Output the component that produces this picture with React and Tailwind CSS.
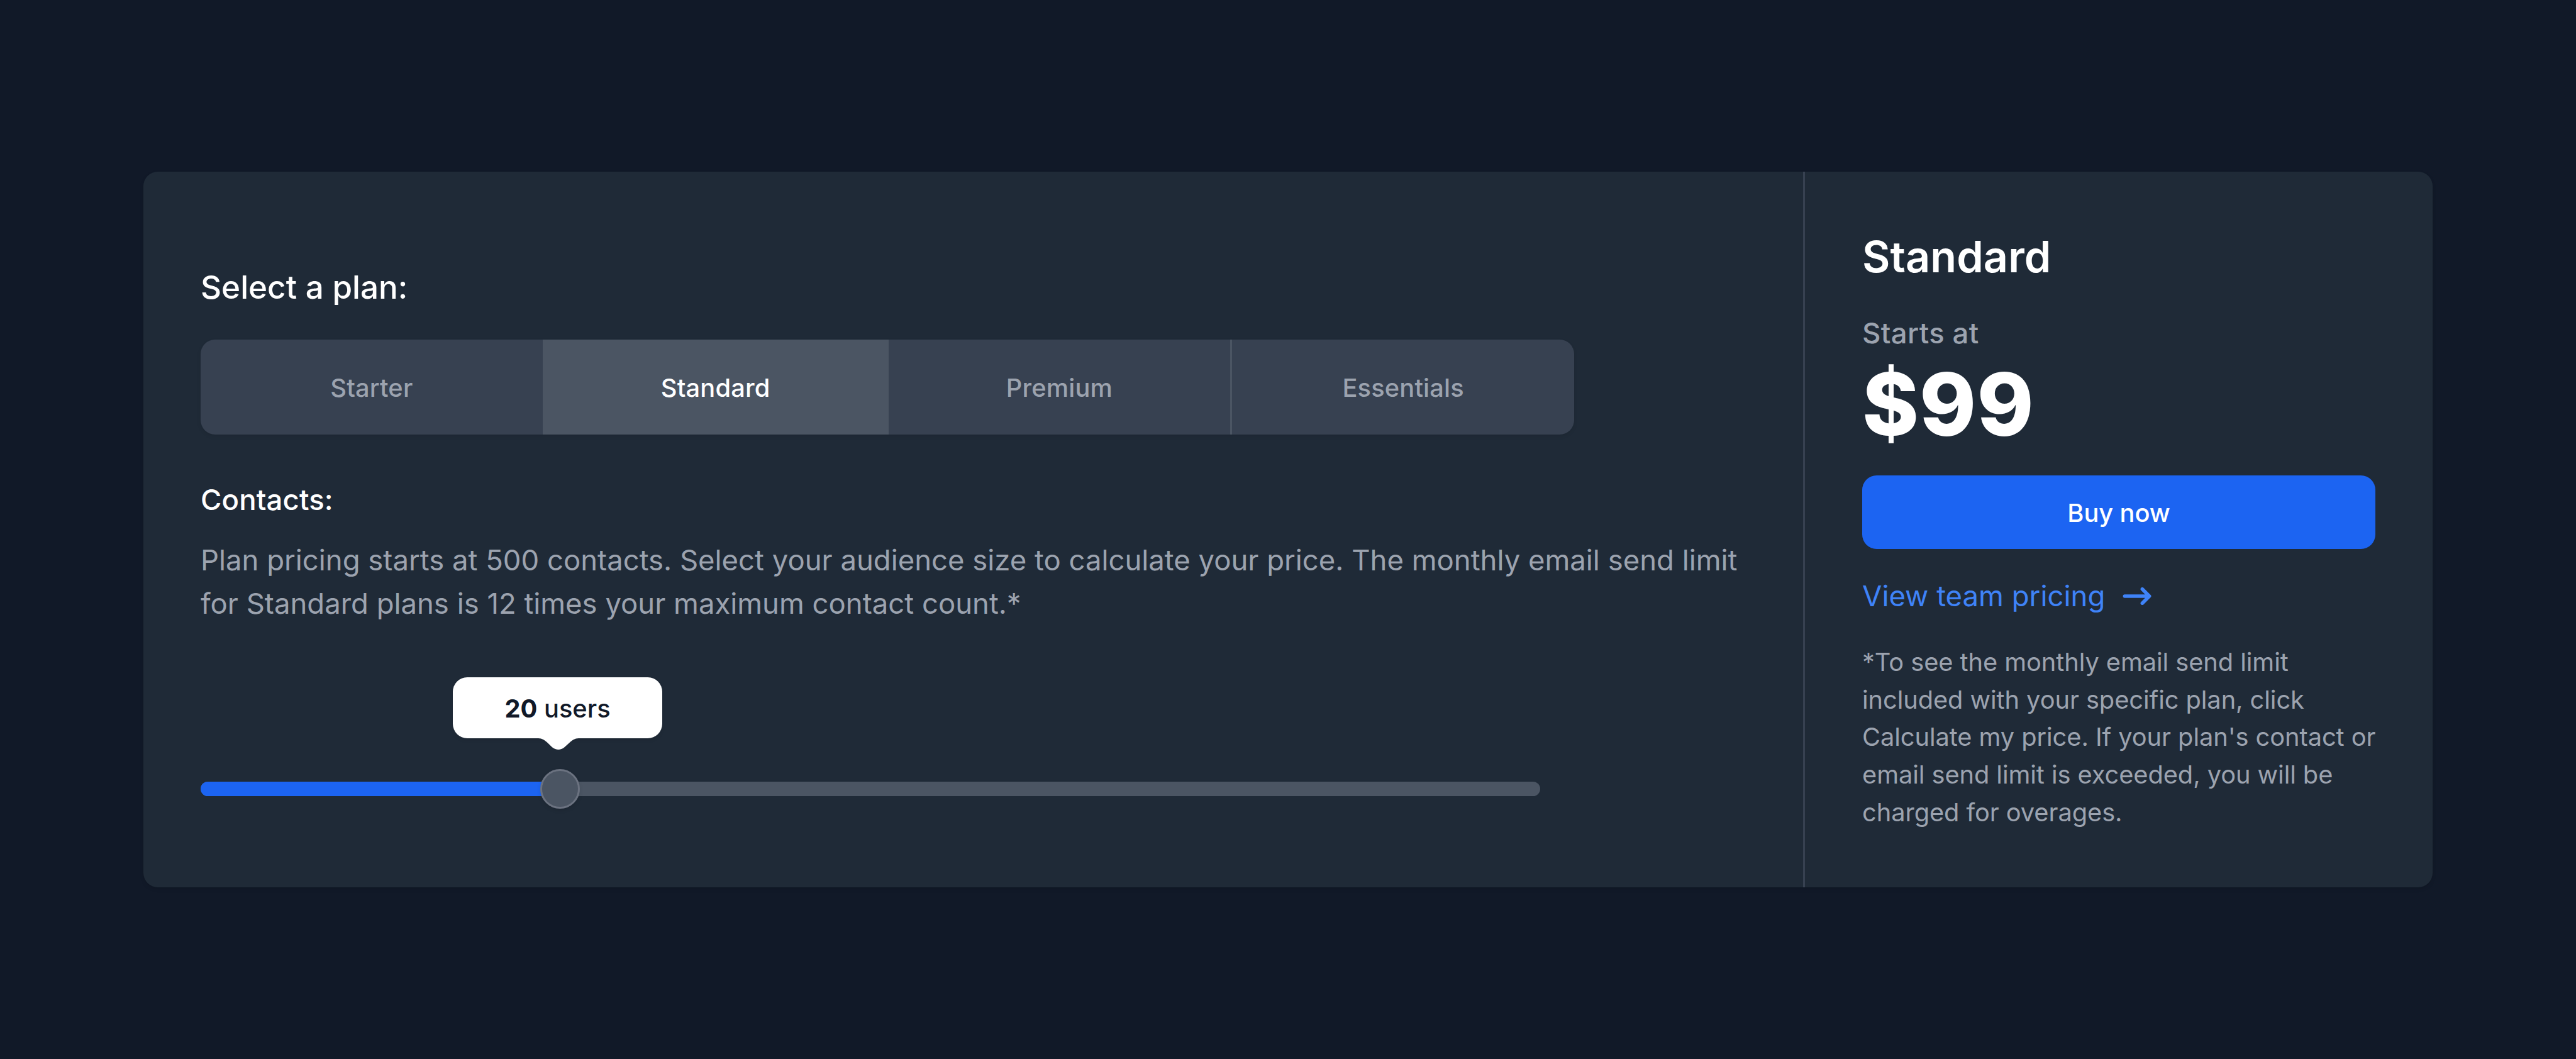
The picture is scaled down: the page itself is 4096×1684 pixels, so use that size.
import React, { useState } from "react";

const plans = ["Starter", "Standard", "Premium", "Essentials"];

const PlanTabs = ({ active, onSelect }) => {
    return (
        <div className="flex h-[151px] w-[2184px] overflow-hidden rounded-[23px] bg-[#374151] shadow-[0_3px_6px_rgba(0,0,0,0.08)]">
            {plans.map((plan, i) => (
                <button
                    key={plan}
                    onClick={() => onSelect(plan)}
                    className={`flex grow basis-0 items-center justify-center box-content pt-[3px] text-[39.82px] leading-[60px] font-medium tracking-[0.15px] ${
                        i < plans.length - 1 ? "border-r-3 border-[#4b5563]" : ""
                    } ${active === plan ? "bg-[#4b5563] text-white" : "text-[#9ca3af]"}`}
                >
                    {plan}
                </button>
            ))}
        </div>
    );
};

const ContactSlider = ({ users }) => {
    return (
        <div className="relative mt-[249px] h-[23px] w-[2130px] rounded-full bg-[#4b5563]">
            <div className="h-full w-[572px] rounded-full bg-[#1c64f2]"></div>

            {/* thumb */}
            <div className="absolute top-[-20px] left-[540px] size-[63px] rounded-full border-3 border-[#6b7280] bg-[#4b5563] shadow-[0_3px_6px_rgba(0,0,0,0.1)]"></div>

            {/* tooltip */}
            <div className="absolute top-[-166px] left-[401px] flex h-[97px] w-[333px] items-center justify-center rounded-[23px] bg-white pt-[3px] text-[39.82px] leading-[60px] text-[#111928] shadow-[0_3px_6px_rgba(0,0,0,0.08)]">
                <p className="font-medium">
                    <span className="font-bold">{users}</span> users
                </p>
                <svg className="absolute top-full left-[136px] h-[18px] w-[64px]" viewBox="0 0 64 18" fill="#fff">
                    <path d="M0 0C6 0 10 3 14.5 7L22 14.2Q32 21.8 41.5 14.2L49.5 7C54 3 58 0 64 0Z" />
                </svg>
            </div>
        </div>
    );
};

const App = () => {
    const [active, setActive] = useState("Standard");

    return (
        <div className="flex h-[1684px] w-[4096px] items-center justify-center bg-[#111928] font-[Inter,sans-serif]">
            <div className="flex h-[1138px] w-[3640px] overflow-hidden rounded-[23px] bg-[#1f2a37] shadow-[0_3px_6px_rgba(0,0,0,0.1)]">

                {/* plan and contacts */}
                <div className="flex grow flex-col justify-center pl-[91px]">
                    <h2 className="text-[51.2px] leading-[77px] font-medium text-white">Select a plan:</h2>
                    <div className="mt-[45px]">
                        <PlanTabs active={active} onSelect={setActive} />
                    </div>
                    <h3 className="mt-[70px] text-[45.51px] leading-[68px] font-medium tracking-[0.15px] text-white">Contacts:</h3>
                    <p className="mt-[28px] w-[2470px] text-[45.51px] leading-[68.27px] tracking-[-0.02px] text-[#9ca3af]">
                        Plan pricing starts at 500 contacts. Select your audience size to calculate your price. The monthly email send limit for Standard plans is 12 times your maximum contact count.*
                    </p>
                    <ContactSlider users={20} />
                </div>

                {/* price */}
                <div className="flex w-[1001px] shrink-0 flex-col border-l-3 border-[#374151] px-[91px] pt-[93px]">
                    <h1 className="text-[68.27px] leading-[85px] font-semibold tracking-[0.1px] text-white">{active}</h1>
                    <p className="mt-[45px] text-[45.51px] leading-[68px] font-medium tracking-[0.35px] text-[#9ca3af]">Starts at</p>
                    <p className="mt-[10px] text-[136.53px] leading-[137px] font-extrabold tracking-[1px] text-white">$99</p>
                    <button className="mt-[45px] h-[117px] rounded-[23px] bg-[#1c64f2] pt-[3px] text-[39.82px] font-medium tracking-[-0.1px] text-white">
                        Buy now
                    </button>
                    <a href="#" className="mt-[46px] flex items-center gap-[28px] text-[45.51px] leading-[57px] text-[#3f83f8]">
                        View team pricing
                        <svg className="h-[28px] w-[46px]" viewBox="0 0 16 10" fill="none" stroke="currentColor" strokeWidth="2" strokeLinecap="round" strokeLinejoin="round">
                            <path d="M1 5h14M11 1l4 4-4 4" />
                        </svg>
                    </a>
                    <p className="mt-[47px] mr-[-6px] text-[39.82px] leading-[59.73px] tracking-[-0.08px] text-[#9ca3af]">
                        *To see the monthly email send limit included with your specific plan, click Calculate my price. If your plan's contact or email send limit is exceeded, you will be charged for overages.
                    </p>
                </div>
            </div>
        </div>
    );
};

export default App;
